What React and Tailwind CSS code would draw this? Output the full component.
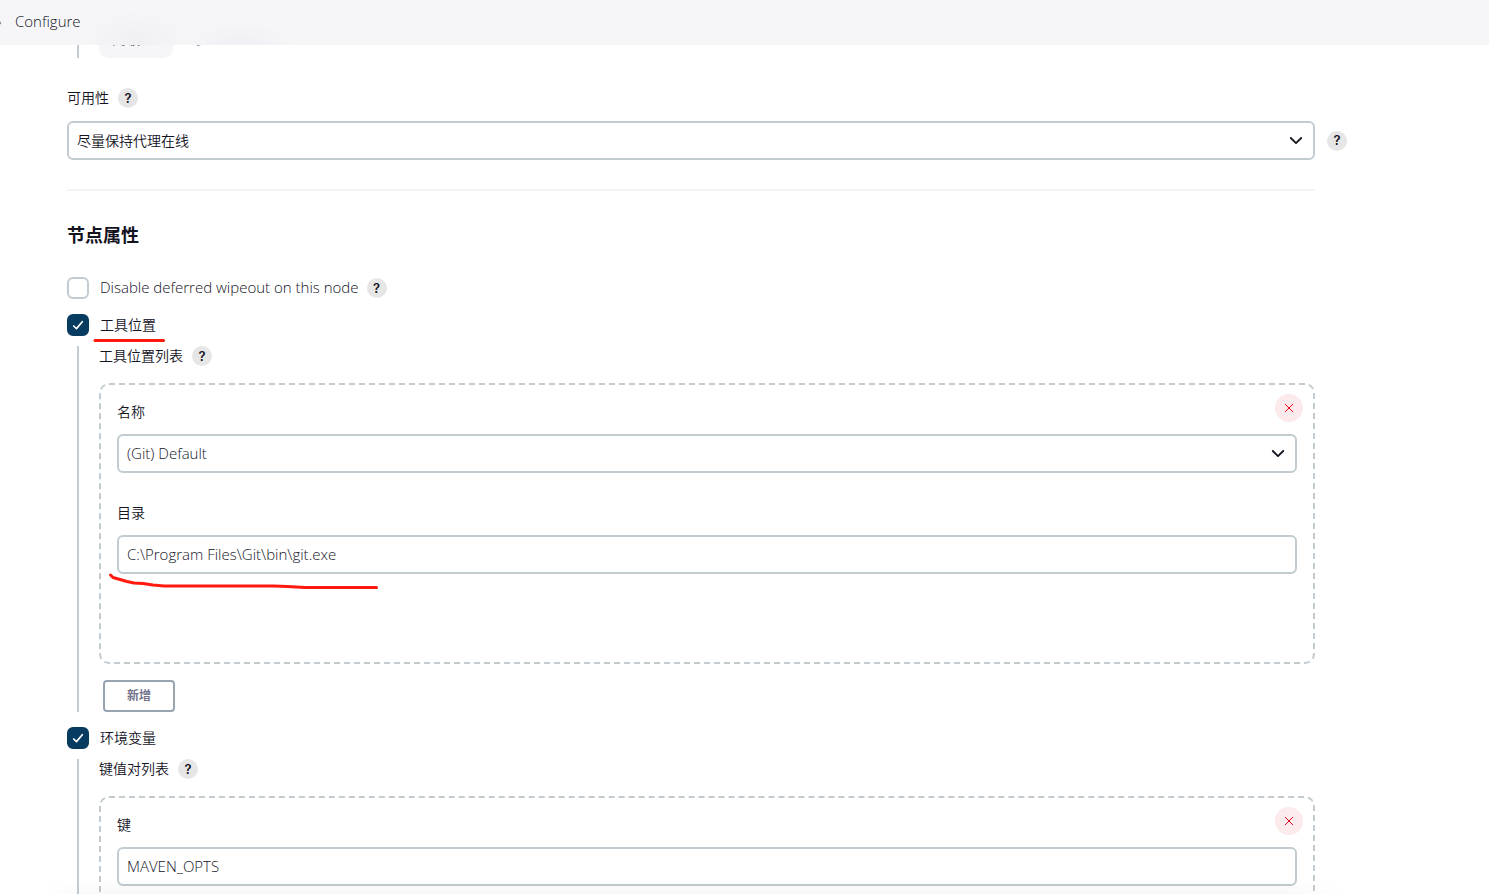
import React, { useId } from "react";

const fieldClass =
  "block h-[39px] w-full appearance-none rounded-md border-2 border-[#c1cbd0] bg-white px-2 text-[#14141f] outline-none";

function Help({ label }) {
  return (
    <button
      type="button"
      aria-label={label}
      className="flex size-5 shrink-0 items-center justify-center rounded-full bg-[#e6e6e6] font-['Inter',sans-serif] text-[13px] font-semibold text-[#14141f]"
    >
      ?
    </button>
  );
}

function LabelRow({ htmlFor, children, help }) {
  return (
    <div className="flex h-5 items-center gap-[9px]">
      <label htmlFor={htmlFor} className="text-sm">
        {children}
      </label>
      {help && <Help label={help} />}
    </div>
  );
}

function Select({ id, value, size = "text-sm" }) {
  return (
    <div className="relative min-w-0 flex-1">
      <select id={id} className={`${fieldClass} ${size}`}>
        <option>{value}</option>
      </select>
      <svg
        className="pointer-events-none absolute top-1/2 right-3 h-2 w-3.5 -translate-y-1/2"
        viewBox="0 0 14 8"
        fill="none"
        stroke="#14141f"
        strokeWidth="1.800"
        strokeLinecap="round"
        strokeLinejoin="round"
      >
        <path d="M1.800 1 7 6.200 12.200 1" />
      </svg>
    </div>
  );
}

function CheckRow({ label, checked, help, size = "text-sm", children }) {
  const id = useId();
  return (
    <div className="relative flex h-[22px] items-center">
      <input
        id={id}
        type="checkbox"
        defaultChecked={checked}
        className="peer size-[22px] appearance-none rounded-md border-2 border-[#c1cbd0] bg-white checked:border-[#073b5f] checked:bg-[#073b5f]"
      />
      <svg
        className="pointer-events-none absolute left-0 hidden size-[22px] peer-checked:block"
        viewBox="0 0 22 22"
        fill="none"
        stroke="#fff"
        strokeWidth="1.700"
        strokeLinecap="round"
        strokeLinejoin="round"
      >
        <path d="M6.700 12 9.500 14.600 15.300 7.700" />
      </svg>
      <label htmlFor={id} className={`mr-2 ml-[11px] ${size}`}>
        {label}
      </label>
      {help && <Help label={help} />}
      {children}
    </div>
  );
}

function Guide({ children }) {
  return (
    <div className="mt-2.5 ml-2.5 border-l-2 border-[#c1cbd0] pl-5">{children}</div>
  );
}

function Chunk({ children }) {
  return (
    <div className="relative mt-[17px] rounded-[10px] border-2 border-dashed border-[#c1cbd0] px-4 pt-[17px] pb-[88px]">
      <button
        type="button"
        aria-label="删除"
        className="absolute top-[9px] right-2.5 flex size-7 items-center justify-center rounded-full bg-[#fceaec]"
      >
        <svg className="size-2.5" viewBox="0 0 10 10" stroke="#e6001f" strokeWidth="1" strokeLinecap="round">
          <path d="M1.300 1.300l7.400 7.400M8.700 1.300 1.300 8.700" />
        </svg>
      </button>
      {children}
    </div>
  );
}

export default function App() {
  return (
    <div
      lang="zh-CN"
      className="relative flex h-screen flex-col overflow-hidden bg-white font-['Open_Sans','Noto_Sans_CJK_SC',sans-serif] text-sm font-[350] text-[#14141f]"
    >
      <header className="relative flex h-[45px] shrink-0 items-center overflow-hidden bg-[#f6f6f8]">
        <div className="absolute top-2 left-20 h-16 w-28 bg-radial from-[#f0f0f3] to-[#f6f6f800] to-70%" />
        <div className="absolute top-5 left-46 h-14 w-28 bg-radial from-[#efeef4] to-[#f6f6f800] to-70%" />
        <svg className="h-2 w-[15px]" viewBox="0 0 15 8" fill="none" stroke="#8c8ca3" strokeWidth="1.500">
          <path d="M-3 0 0.500 4-3 8" />
        </svg>
        <a href="#configure" className="relative -mt-0.5 text-[15px]">
          Configure
        </a>
      </header>

      <main className="min-h-0 flex-1 overflow-hidden pr-[142px] pl-[67px]">
        <div className="flex h-[13px] items-end overflow-hidden">
          <div className="ml-2.5 flex h-[38px] items-center border-l-2 border-[#c1cbd0] pl-5">
            <button type="button" className="h-[38px] w-[74px] rounded-[10px] bg-[#f6f6f8] pr-5 text-sm">
              高级
            </button>
            <svg className="ml-6 size-3.5" viewBox="0 0 14 14" fill="none" stroke="#73738c" strokeWidth="1.500">
              <path d="M1 13l1-4 8-8 3 3-8 8z" />
            </svg>
          </div>
        </div>

        <div className="mt-[30px]">
          <LabelRow htmlFor="availability" help="可用性帮助">
            可用性
          </LabelRow>
          <div className="mt-[13px] flex items-center gap-3">
            <Select id="availability" value="尽量保持代理在线" />
            <Help label="代理在线帮助" />
          </div>
        </div>

        <div className="mr-8">
          <hr className="mt-[29px] border-t-2 border-[#f2f2f7]" />
          <h2 className="mt-8 text-lg leading-6 font-bold">节点属性</h2>

          <div className="mt-[30px]">
            <CheckRow
              label="Disable deferred wipeout on this node"
              help="Disable deferred wipeout"
              size="text-[15px]"
            />
          </div>

          <section className="mt-[15px]">
            <CheckRow label="工具位置" checked>
              <svg
                className="pointer-events-none absolute top-6 left-6 h-1.5 w-20"
                viewBox="0 0 80 6"
                stroke="#ff1a0d"
                strokeWidth="3"
                strokeLinecap="round"
              >
                <path d="M4 2.500H72.500" />
              </svg>
            </CheckRow>
            <Guide>
              <LabelRow help="工具位置列表帮助">工具位置列表</LabelRow>
              <Chunk>
                <LabelRow htmlFor="tool-name">名称</LabelRow>
                <div className="mt-3 flex">
                  <Select id="tool-name" value="(Git) Default" size="text-[15px]" />
                </div>
                <div className="mt-[30px]">
                  <LabelRow htmlFor="tool-home">目录</LabelRow>
                </div>
                <div className="relative mt-3">
                  <input
                    id="tool-home"
                    type="text"
                    className={`${fieldClass} pb-0.5 text-[15px]`}
                    defaultValue="C:\Program Files\Git\bin\git.exe"
                  />
                  <svg
                    className="pointer-events-none absolute top-9 -left-2.5 h-5 w-[280px]"
                    viewBox="0 0 280 20"
                    fill="none"
                    stroke="#ff1a0d"
                    strokeWidth="3"
                    strokeLinecap="round"
                    strokeLinejoin="round"
                  >
                    <path d="M3.500 4 6 6.500 13 8.500 20 10.500 27 12 36 12.500 46 14 57 15H167L180 15.500 198 16.500H269.500" />
                  </svg>
                </div>
              </Chunk>
              <button
                type="button"
                className="mt-4 ml-1 flex h-8 w-[72px] items-center justify-center rounded border-2 border-[#98a5b1] bg-white text-xs font-bold text-[#73738c]"
              >
                新增
              </button>
            </Guide>
          </section>

          <section className="mt-[15px]">
            <CheckRow label="环境变量" checked />
            <Guide>
              <LabelRow help="键值对列表帮助">键值对列表</LabelRow>
              <Chunk>
                <LabelRow htmlFor="env-key">键</LabelRow>
                <div className="mt-3">
                  <input
                    id="env-key"
                    type="text"
                    className={`${fieldClass} pb-0.5 text-[15px]`}
                    defaultValue="MAVEN_OPTS"
                  />
                </div>
              </Chunk>
            </Guide>
          </section>
        </div>
      </main>

      <div className="pointer-events-none absolute right-36 bottom-0 left-10 h-4 bg-linear-to-t from-black/3 to-transparent mask-x-from-95%" />
    </div>
  );
}
